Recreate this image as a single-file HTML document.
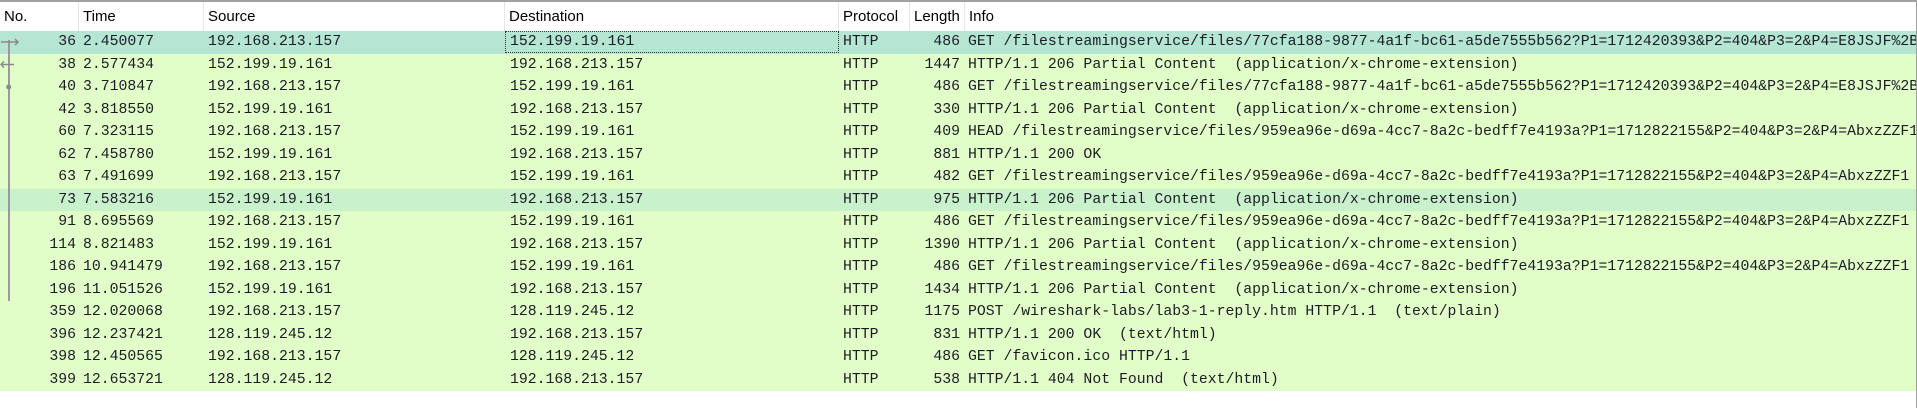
<!DOCTYPE html>
<html><head><meta charset="utf-8"><style>
*{margin:0;padding:0;box-sizing:border-box}
body{width:1917px;height:408px;background:#fff;overflow:hidden;position:relative;font-family:"Liberation Mono",monospace;font-size:14.8px;color:#1c1c24}
.hdr{position:absolute;top:0;left:0;width:1917px;height:31px;border-top:2px solid #a0a0a0;font-family:"Liberation Sans",sans-serif;font-size:15px;color:#000}
.hdr div{position:absolute;top:0;height:29px;line-height:30px;padding-left:4px;border-right:1px solid #e5e5e5}
.row{position:absolute;left:0;width:1916px;height:22.5px;background:#e2fec8;white-space:pre;overflow:hidden}
.row span{position:absolute;top:0;line-height:22px;overflow:hidden}
.n{left:0;width:76px;text-align:right}
.t{left:83px}.s{left:208px}.d{left:510px}.p{left:843px}
.l{left:900px;width:60px;text-align:right}
.i{left:968px}
.sel{background:#b4e6d3}
.hl{background:#c9f1cc}
.focus{position:absolute;left:505px;top:0;width:334px;height:22px;border:1px dotted #333}
.rb{position:absolute;left:1916px;top:0;width:1px;height:408px;background:#a0a0a0}
.vl{position:absolute;left:8px;top:40px;width:1.5px;height:261px;background:#9a9a9a}
</style></head><body>
<div class="hdr">
<div style="left:0;width:79px">No.</div>
<div style="left:79px;width:125px">Time</div>
<div style="left:204px;width:301px">Source</div>
<div style="left:505px;width:334px">Destination</div>
<div style="left:839px;width:71px">Protocol</div>
<div style="left:910px;width:55px">Length</div>
<div style="left:965px;width:952px;border-right:none">Info</div>
</div>
<div class="row sel" style="top:31px"><div class="focus"></div><span class="n">36</span><span class="t">2.450077</span><span class="s">192.168.213.157</span><span class="d">152.199.19.161</span><span class="p">HTTP</span><span class="l">486</span><span class="i">GET /filestreamingservice/files/77cfa188-9877-4a1f-bc61-a5de7555b562?P1=1712420393&amp;P2=404&amp;P3=2&amp;P4=E8JSJF%2B</span></div>
<div class="row" style="top:53.5px"><span class="n">38</span><span class="t">2.577434</span><span class="s">152.199.19.161</span><span class="d">192.168.213.157</span><span class="p">HTTP</span><span class="l">1447</span><span class="i">HTTP/1.1 206 Partial Content  (application/x-chrome-extension)</span></div>
<div class="row" style="top:76px"><span class="n">40</span><span class="t">3.710847</span><span class="s">192.168.213.157</span><span class="d">152.199.19.161</span><span class="p">HTTP</span><span class="l">486</span><span class="i">GET /filestreamingservice/files/77cfa188-9877-4a1f-bc61-a5de7555b562?P1=1712420393&amp;P2=404&amp;P3=2&amp;P4=E8JSJF%2B</span></div>
<div class="row" style="top:98.5px"><span class="n">42</span><span class="t">3.818550</span><span class="s">152.199.19.161</span><span class="d">192.168.213.157</span><span class="p">HTTP</span><span class="l">330</span><span class="i">HTTP/1.1 206 Partial Content  (application/x-chrome-extension)</span></div>
<div class="row" style="top:121px"><span class="n">60</span><span class="t">7.323115</span><span class="s">192.168.213.157</span><span class="d">152.199.19.161</span><span class="p">HTTP</span><span class="l">409</span><span class="i">HEAD /filestreamingservice/files/959ea96e-d69a-4cc7-8a2c-bedff7e4193a?P1=1712822155&amp;P2=404&amp;P3=2&amp;P4=AbxzZZF1</span></div>
<div class="row" style="top:143.5px"><span class="n">62</span><span class="t">7.458780</span><span class="s">152.199.19.161</span><span class="d">192.168.213.157</span><span class="p">HTTP</span><span class="l">881</span><span class="i">HTTP/1.1 200 OK</span></div>
<div class="row" style="top:166px"><span class="n">63</span><span class="t">7.491699</span><span class="s">192.168.213.157</span><span class="d">152.199.19.161</span><span class="p">HTTP</span><span class="l">482</span><span class="i">GET /filestreamingservice/files/959ea96e-d69a-4cc7-8a2c-bedff7e4193a?P1=1712822155&amp;P2=404&amp;P3=2&amp;P4=AbxzZZF1</span></div>
<div class="row hl" style="top:188.5px"><span class="n">73</span><span class="t">7.583216</span><span class="s">152.199.19.161</span><span class="d">192.168.213.157</span><span class="p">HTTP</span><span class="l">975</span><span class="i">HTTP/1.1 206 Partial Content  (application/x-chrome-extension)</span></div>
<div class="row" style="top:211px"><span class="n">91</span><span class="t">8.695569</span><span class="s">192.168.213.157</span><span class="d">152.199.19.161</span><span class="p">HTTP</span><span class="l">486</span><span class="i">GET /filestreamingservice/files/959ea96e-d69a-4cc7-8a2c-bedff7e4193a?P1=1712822155&amp;P2=404&amp;P3=2&amp;P4=AbxzZZF1</span></div>
<div class="row" style="top:233.5px"><span class="n">114</span><span class="t">8.821483</span><span class="s">152.199.19.161</span><span class="d">192.168.213.157</span><span class="p">HTTP</span><span class="l">1390</span><span class="i">HTTP/1.1 206 Partial Content  (application/x-chrome-extension)</span></div>
<div class="row" style="top:256px"><span class="n">186</span><span class="t">10.941479</span><span class="s">192.168.213.157</span><span class="d">152.199.19.161</span><span class="p">HTTP</span><span class="l">486</span><span class="i">GET /filestreamingservice/files/959ea96e-d69a-4cc7-8a2c-bedff7e4193a?P1=1712822155&amp;P2=404&amp;P3=2&amp;P4=AbxzZZF1</span></div>
<div class="row" style="top:278.5px"><span class="n">196</span><span class="t">11.051526</span><span class="s">152.199.19.161</span><span class="d">192.168.213.157</span><span class="p">HTTP</span><span class="l">1434</span><span class="i">HTTP/1.1 206 Partial Content  (application/x-chrome-extension)</span></div>
<div class="row" style="top:301px"><span class="n">359</span><span class="t">12.020068</span><span class="s">192.168.213.157</span><span class="d">128.119.245.12</span><span class="p">HTTP</span><span class="l">1175</span><span class="i">POST /wireshark-labs/lab3-1-reply.htm HTTP/1.1  (text/plain)</span></div>
<div class="row" style="top:323.5px"><span class="n">396</span><span class="t">12.237421</span><span class="s">128.119.245.12</span><span class="d">192.168.213.157</span><span class="p">HTTP</span><span class="l">831</span><span class="i">HTTP/1.1 200 OK  (text/html)</span></div>
<div class="row" style="top:346px"><span class="n">398</span><span class="t">12.450565</span><span class="s">192.168.213.157</span><span class="d">128.119.245.12</span><span class="p">HTTP</span><span class="l">486</span><span class="i">GET /favicon.ico HTTP/1.1</span></div>
<div class="row" style="top:368.5px"><span class="n">399</span><span class="t">12.653721</span><span class="s">128.119.245.12</span><span class="d">192.168.213.157</span><span class="p">HTTP</span><span class="l">538</span><span class="i">HTTP/1.1 404 Not Found  (text/html)</span></div>
<div class="vl"></div>
<svg style="position:absolute;left:0;top:31px" width="24" height="60">
<path d="M1 11H18" stroke="#8a8a8a" stroke-width="1.5"/><path d="M15 8L18 11L15 14" stroke="#8a8a8a" fill="none" stroke-width="1.5"/>
<path d="M1 33.5H14" stroke="#8a8a8a" stroke-width="1.5"/><path d="M4 30.5L1 33.5L4 36.5" stroke="#8a8a8a" fill="none" stroke-width="1.5"/>
<circle cx="8.7" cy="56" r="2.5" fill="#8a8a8a"/>
</svg>
<div class="rb"></div>
</body></html>
